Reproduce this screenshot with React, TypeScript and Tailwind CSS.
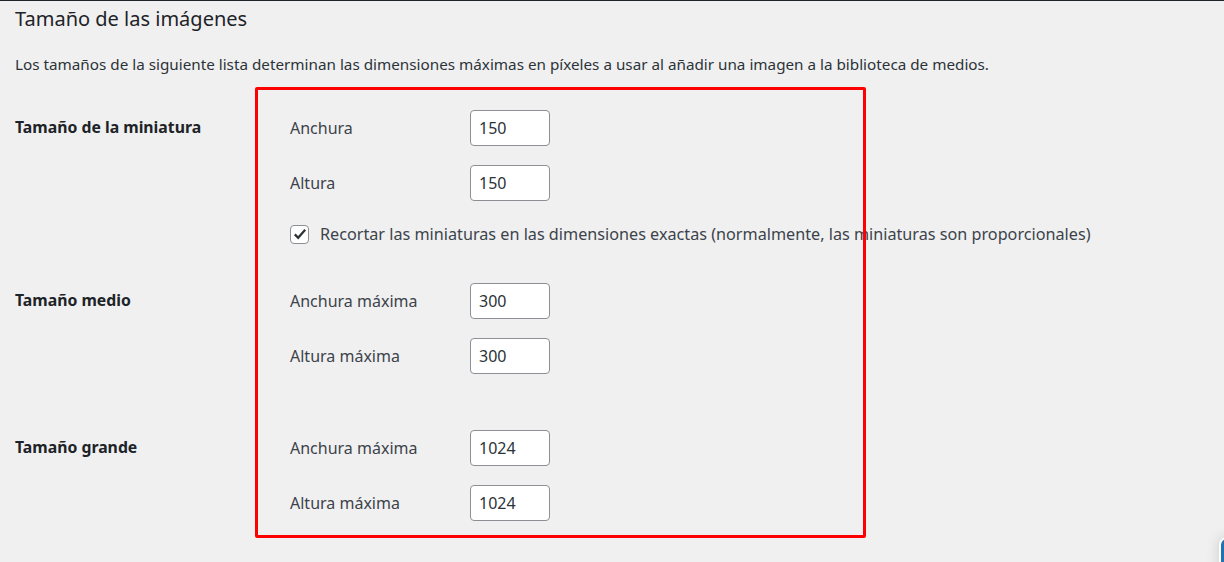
import React from "react";

type Field = { label: string; value: string };

type SizeRow = {
  title: string;
  fields: Field[];
  crop?: boolean;
  spaceTop: string;
};

const rows: SizeRow[] = [
  {
    title: "Tamaño de la miniatura",
    fields: [
      { label: "Anchura", value: "150" },
      { label: "Altura", value: "150" },
    ],
    crop: true,
    spaceTop: "mt-[36px]",
  },
  {
    title: "Tamaño medio",
    fields: [
      { label: "Anchura máxima", value: "300" },
      { label: "Altura máxima", value: "300" },
    ],
    spaceTop: "mt-[39px]",
  },
  {
    title: "Tamaño grande",
    fields: [
      { label: "Anchura máxima", value: "1024" },
      { label: "Altura máxima", value: "1024" },
    ],
    spaceTop: "mt-[56px]",
  },
];

const App = () => {
  return (
    <div
      className="relative w-[1224px] h-[562px] overflow-hidden bg-[#f0f0f1] border-t border-[#1d2327]"
      style={{ fontFamily: '"Noto Sans", "Open Sans", sans-serif' }}
    >
      <div className="px-[15px]">
        <h2 className="text-[20px] leading-[24px] pt-[6px] text-[#1d2327]">
          Tamaño de las imágenes
        </h2>
        <p className="mt-[23px] text-[15.25px] leading-[20px] text-[#2c3338]">
          Los tamaños de la siguiente lista determinan las dimensiones máximas en píxeles a usar al añadir una imagen a la biblioteca de medios.
        </p>

        {rows.map((row) => (
          <div key={row.title} className={`grid grid-cols-[275px_1fr] ${row.spaceTop}`}>
            <div className="h-[36px] flex items-center font-bold text-[15.8px] text-[#1d2327]">
              {row.title}
            </div>
            <div className="flex flex-col gap-[19px]">
              {row.fields.map((f, i) => (
                <div key={i} className="h-[36px] flex items-center">
                  <span className="w-[180px] text-[16px] text-[#3c434a]">{f.label}</span>
                  <input
                    type="text"
                    defaultValue={f.value}
                    className="w-[80px] h-[36px] px-[8px] text-[16px] text-[#2c3338] bg-white border border-[#8c8f94] rounded-[4px] outline-none"
                  />
                </div>
              ))}
              {row.crop && (
                <label className="mt-[4px] h-[20px] flex items-center gap-[11px] text-[16.2px] text-[#3c434a]">
                  <span className="w-[19px] h-[19px] flex items-center justify-center bg-white border border-[#8c8f94] rounded-[4px]">
                    <svg width="16" height="16" viewBox="0 0 20 20">
                      <path d="M3.5 10.5l4.2 4.3 8.8-10" fill="none" stroke="#2c3338" strokeWidth="2.8" />
                    </svg>
                  </span>
                  Recortar las miniaturas en las dimensiones exactas (normalmente, las miniaturas son proporcionales)
                </label>
              )}
            </div>
          </div>
        ))}
      </div>

      {/* red annotation box */}
      <div className="absolute left-[255px] top-[86px] w-[611px] h-[451px] border-[3px] border-[#ff0000] rounded-[2px] pointer-events-none" />

      {/* partial floating button in the corner */}
      <div className="absolute left-[1219px] top-[536px] w-[24px] h-[40px] rounded-tl-[8px] bg-[#2271b1] border-2 border-white shadow-[0_0_14px_rgba(0,0,0,0.15)]" />
    </div>
  );
};

export default App;
